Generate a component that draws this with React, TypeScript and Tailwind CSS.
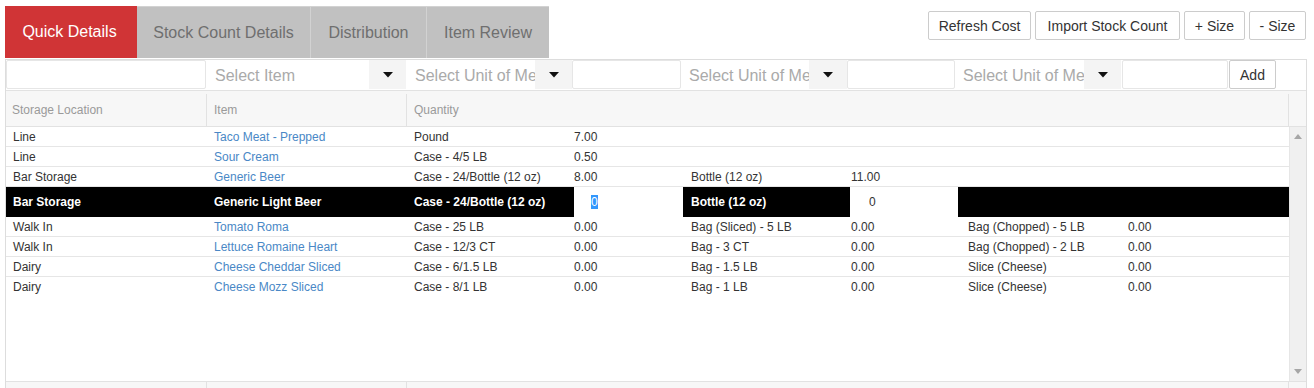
import React from "react";

type Row = {
  loc: string;
  item: string;
  u1: string;
  q1: string;
  u2?: string;
  q2?: string;
  u3?: string;
  q3?: string;
  edit?: boolean;
};

const rows: Row[] = [
  { loc: "Line", item: "Taco Meat - Prepped", u1: "Pound", q1: "7.00" },
  { loc: "Line", item: "Sour Cream", u1: "Case - 4/5 LB", q1: "0.50" },
  { loc: "Bar Storage", item: "Generic Beer", u1: "Case - 24/Bottle (12 oz)", q1: "8.00", u2: "Bottle (12 oz)", q2: "11.00" },
  { loc: "Bar Storage", item: "Generic Light Beer", u1: "Case - 24/Bottle (12 oz)", q1: "0", u2: "Bottle (12 oz)", q2: "0", edit: true },
  { loc: "Walk In", item: "Tomato Roma", u1: "Case - 25 LB", q1: "0.00", u2: "Bag (Sliced) - 5 LB", q2: "0.00", u3: "Bag (Chopped) - 5 LB", q3: "0.00" },
  { loc: "Walk In", item: "Lettuce Romaine Heart", u1: "Case - 12/3 CT", q1: "0.00", u2: "Bag - 3 CT", q2: "0.00", u3: "Bag (Chopped) - 2 LB", q3: "0.00" },
  { loc: "Dairy", item: "Cheese Cheddar Sliced", u1: "Case - 6/1.5 LB", q1: "0.00", u2: "Bag - 1.5 LB", q2: "0.00", u3: "Slice (Cheese)", q3: "0.00" },
  { loc: "Dairy", item: "Cheese Mozz Sliced", u1: "Case - 8/1 LB", q1: "0.00", u2: "Bag - 1 LB", q2: "0.00", u3: "Slice (Cheese)", q3: "0.00" },
];

function Caret() {
  return (
    <svg width="10" height="6" viewBox="0 0 10 6">
      <path d="M0 0 L10 0 L5 5.5 Z" fill="#111" />
    </svg>
  );
}

function Select({ text, textW, ddW }: { text: string; textW: string; ddW: string }) {
  return (
    <div className="flex h-[29px]">
      <div className={`${textW} h-full overflow-hidden whitespace-nowrap bg-white pl-[8px] pt-[1px] text-[16px] leading-[29px] text-[#aaaaaa]`}>
        {text}
      </div>
      <div className={`${ddW} flex h-full items-center justify-center bg-[#f4f4f4]`}>
        <Caret />
      </div>
    </div>
  );
}

function Box({ w }: { w: string }) {
  return <div className={`${w} h-[29px] rounded-[2px] border border-[#e6e6e6] bg-white`} />;
}

export default function App() {
  return (
    <div className="h-[388px] w-[1314px] overflow-hidden bg-white font-['Liberation_Sans',Arial,sans-serif]">
      {/* Top bar */}
      <div className="flex items-start justify-between pl-[5px] pr-[8px]">
        <div className="mt-[6px] flex h-[52px] text-[16px]">
          <div className="flex w-[132px] items-center justify-center bg-[#d03436] pr-[3px] text-white">Quick Details</div>
          <div className="flex w-[174px] items-center justify-center border-t border-r border-[#d2d2d2] bg-[#c1c1c1] text-[#6f6f6f]">Stock Count Details</div>
          <div className="flex w-[116px] items-center justify-center border-t border-r border-[#d2d2d2] bg-[#c1c1c1] text-[#6f6f6f]">Distribution</div>
          <div className="flex w-[122px] items-center justify-center border-t border-[#d2d2d2] bg-[#c1c1c1] text-[#6f6f6f]">Item Review</div>
        </div>
        <div className="mt-[11px] flex gap-[4px] text-[14px] text-[#333]">
          <div className="flex h-[29px] w-[103px] items-center justify-center rounded-[2px] border border-[#cccccc] bg-white pt-[2px]">Refresh Cost</div>
          <div className="flex h-[29px] w-[145px] items-center justify-center rounded-[2px] border border-[#cccccc] bg-white pt-[2px]">Import Stock Count</div>
          <div className="flex h-[29px] w-[61px] items-center justify-center rounded-[2px] border border-[#cccccc] bg-white pt-[2px]">+ Size</div>
          <div className="flex h-[29px] w-[57px] items-center justify-center rounded-[2px] border border-[#cccccc] bg-white pt-[2px]">- Size</div>
        </div>
      </div>

      {/* Grid */}
      <div className="ml-[5px] mt-[1px] w-[1302px] border border-[#dddddd] text-[12px]">
        {/* Filter row */}
        <div className="flex h-[30px] items-start bg-white">
          <Box w="w-[200px]" />
          <div className="ml-[1px]">
            <Select text="Select Item" textW="w-[162px]" ddW="w-[37px]" />
          </div>
          <div className="ml-[1px]">
            <Select text="Select Unit of Measure" textW="w-[128px]" ddW="w-[37px]" />
          </div>
          <Box w="w-[109px]" />
          <Select text="Select Unit of Measure" textW="w-[128px]" ddW="w-[38px]" />
          <Box w="w-[108px]" />
          <Select text="Select Unit of Measure" textW="w-[129px]" ddW="w-[37px]" />
          <div className="ml-[1px]">
            <Box w="w-[106px]" />
          </div>
          <div className="ml-[1px] flex h-[29px] w-[47px] items-center justify-center rounded-[2px] border border-[#cccccc] bg-white pt-[1px] text-[14px] text-[#333]">
            Add
          </div>
        </div>

        {/* Header */}
        <div className="flex h-[37px] border-y border-[#e2e2e2] bg-[#f7f7f7] pt-[3px] text-[#9a9a9a]">
          <div className="flex w-[201px] items-center border-r border-[#e2e2e2] pl-[6px]">Storage Location</div>
          <div className="flex w-[200px] items-center border-r border-[#e2e2e2] pl-[7px]">Item</div>
          <div className="flex w-[882px] items-center border-r border-[#e2e2e2] pl-[7px]">Quantity</div>
          <div className="flex-1" />
        </div>

        {/* Body */}
        <div className="flex h-[254px]">
          <div className="w-[1283px]">
            {rows.map((r, i) =>
              r.edit ? (
                <div key={i} className="flex h-[30px] items-center bg-black font-bold text-white">
                  <div className="w-[201px] pl-[7px]">{r.loc}</div>
                  <div className="w-[200px] pl-[7px]">{r.item}</div>
                  <div className="w-[160px] pl-[7px] whitespace-nowrap">{r.u1}</div>
                  <div className="flex h-full w-[117px]">
                    <div className="ml-[7px] flex h-full w-[109px] items-center bg-white pl-[17px] font-normal text-[#333]">
                      <span className="bg-[#3297fd] leading-[14px] text-white">{r.q1}</span>
                    </div>
                  </div>
                  <div className="w-[160px] pl-[7px] whitespace-nowrap">{r.u2}</div>
                  <div className="flex h-full w-[117px]">
                    <div className="ml-[6px] flex h-full w-[108px] items-center bg-white pl-[19px] font-normal text-[#333]">
                      {r.q2}
                    </div>
                  </div>
                  <div className="flex-1" />
                </div>
              ) : (
                <div
                  key={i}
                  className={`flex h-[20px] items-center text-[#333] ${i === rows.length - 1 ? "" : "border-b border-[#e6e6e6]"}`}
                >
                  <div className="w-[201px] pl-[7px]">{r.loc}</div>
                  <div className="w-[200px] pl-[7px] text-[#4a88c6]">{r.item}</div>
                  <div className="w-[160px] pl-[7px] whitespace-nowrap">{r.u1}</div>
                  <div className="w-[117px] pl-[7px]">{r.q1}</div>
                  <div className="w-[160px] pl-[7px] whitespace-nowrap">{r.u2 ?? ""}</div>
                  <div className="w-[117px] pl-[7px]">{r.q2 ?? ""}</div>
                  <div className="w-[160px] pl-[7px] whitespace-nowrap">{r.u3 ?? ""}</div>
                  <div className="flex-1 pl-[7px]">{r.q3 ?? ""}</div>
                </div>
              )
            )}
          </div>
          <div className="flex flex-1 flex-col items-center justify-between border-l border-[#e6e6e6] bg-[#f0f0f0] pt-[7px] pb-[7px]">
            <svg width="8" height="5" viewBox="0 0 8 5">
              <path d="M0 5 L8 5 L4 0 Z" fill="#a6a6a6" />
            </svg>
            <svg width="8" height="5" viewBox="0 0 8 5">
              <path d="M0 0 L8 0 L4 5 Z" fill="#a6a6a6" />
            </svg>
          </div>
        </div>

        {/* Footer */}
        <div className="flex h-[10px] border-t border-[#e2e2e2] bg-[#f7f7f7]">
          <div className="w-[201px] border-r border-[#e2e2e2]" />
          <div className="w-[200px] border-r border-[#e2e2e2]" />
          <div className="w-[882px] border-r border-[#e2e2e2]" />
          <div className="flex-1" />
        </div>
      </div>
    </div>
  );
}
